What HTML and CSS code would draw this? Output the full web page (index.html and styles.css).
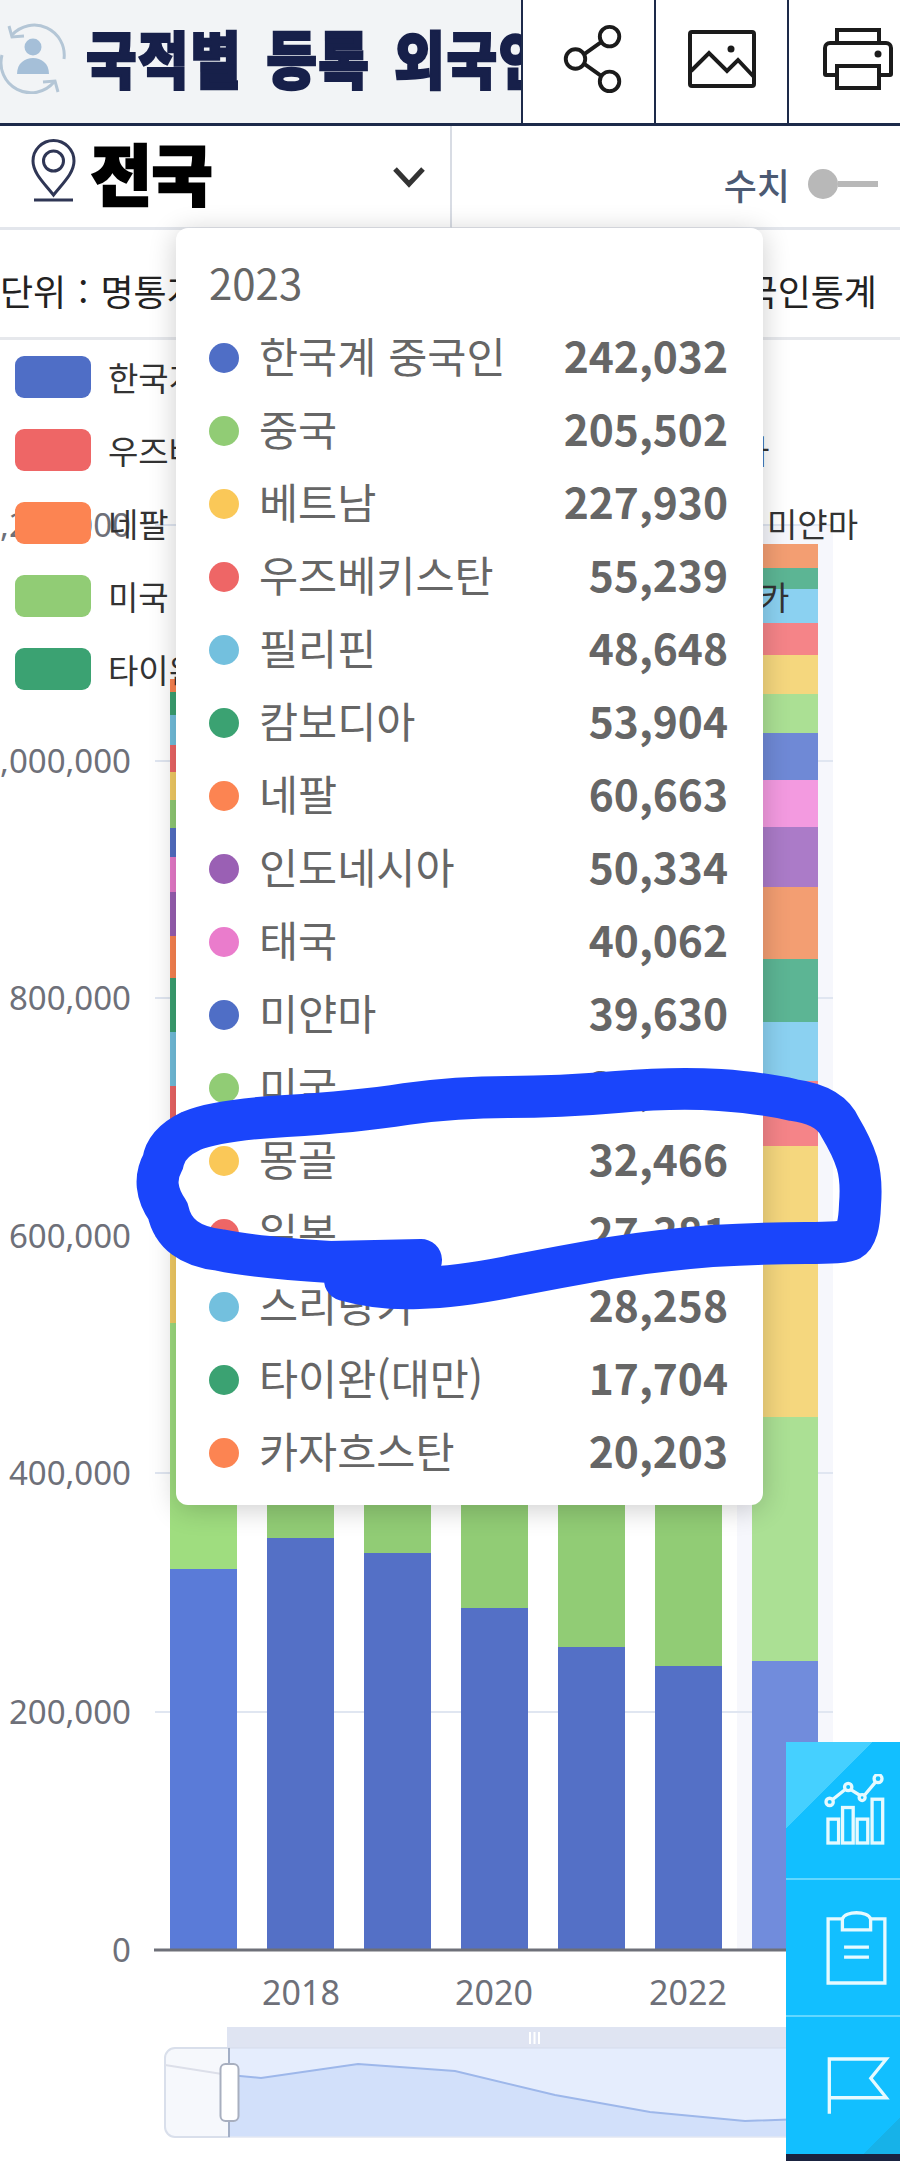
FILE: index.html
```html
<!DOCTYPE html>
<html lang="ko">
<head>
  <meta charset="UTF-8">
  <title>국적별 등록 외국인 현황</title>
  <link rel="stylesheet" href="styles.css">
</head>
<body>
<div class="page">

  <!-- Title bar -->
  <div class="top-bar">
    <div class="title-box">
      <svg class="title-icon" viewBox="0 0 66 74" fill="none" stroke="#b4c6d6" stroke-width="3">
        <path d="M12 15A30 30 0 0 1 64 39"/>
        <path d="M9 6l3 11 12-1"/>
        <path d="M54 62A30 30 0 0 1 2 35"/>
        <path d="M58 72l-3-11-12 1"/>
        <circle cx="33" cy="27" r="8.500" fill="#a5bfd8" stroke="none"/>
        <path d="M17 54c0-11 8-16 16-16s16 5 16 16z" fill="#a5bfd8" stroke="none"/>
      </svg>
      <h1 class="title">국적별 등록 외국인 현황</h1>
    </div>
    <div class="tool-btn tool-btn-first">
      <svg width="62" height="72" viewBox="0 0 62 74" fill="none" stroke="#1b1b1b" stroke-width="4">
        <circle cx="48" cy="14" r="10"/>
        <circle cx="13" cy="37" r="10"/>
        <circle cx="48" cy="60" r="10"/>
        <path d="M22 32l17-12M22 42l17 12"/>
      </svg>
    </div>
    <div class="tool-btn">
      <svg width="68" height="58" viewBox="0 0 68 58" fill="none" stroke="#1b1b1b" stroke-width="4">
        <rect x="2" y="2" width="64" height="54" rx="2"/>
        <path d="M3 41l18-18 18 18 11-11 16 17"/>
        <circle cx="43" cy="19" r="3.500" fill="#1b1b1b" stroke="none"/>
      </svg>
    </div>
    <div class="tool-btn tool-btn-last">
      <svg width="70" height="62" viewBox="0 0 70 62" fill="none" stroke="#1b1b1b" stroke-width="4">
        <path d="M14 15V2h42v13"/>
        <path d="M14 47H3a1 1 0 0 1-1-1V20a5 5 0 0 1 5-5h56a5 5 0 0 1 5 5v26a1 1 0 0 1-1 1H56"/>
        <rect x="14" y="38" width="42" height="22"/>
        <circle cx="55" cy="26" r="3.500" fill="#1b1b1b" stroke="none"/>
      </svg>
    </div>
  </div>

  <!-- Region and value toggle -->
  <div class="filter-row">
    <div class="region-box">
      <svg class="pin-icon" viewBox="0 0 47 63" fill="none" stroke="#2f3655" stroke-width="3">
        <path d="M23.500 56C14 44 3 34 3 22a20.500 20.500 0 0 1 41 0c0 12-11 22-20.500 34z"/>
        <circle cx="23.500" cy="22" r="10"/>
        <path d="M4 61h39"/>
      </svg>
      <span class="region-name">전국</span>
      <svg class="chevron" viewBox="0 0 34 22" fill="none" stroke="#333" stroke-width="5">
        <path d="M3 3l14 15L31 3"/>
      </svg>
    </div>
    <div class="toggle-box">
      <span class="toggle-label">수치</span>
      <span class="toggle-dot"></span>
      <span class="toggle-line"></span>
    </div>
  </div>

  <!-- Unit and source -->
  <div class="unit-row">
    <span>단위 : 명통계</span>
    <span class="source">외국인통계</span>
  </div>

  <!-- Chart -->
  <div class="chart-area">
    <svg class="chart" width="900" height="1820" viewBox="0 340 900 1820">
      <rect x="737" y="525" width="96" height="1425" fill="#f6f7fc"/>
      <g stroke="#e0e6f1" stroke-width="2">
        <path d="M155 525H833M155 761H833M155 998H833M155 1236H833M155 1473H833M155 1712H833"/>
      </g>

      <g class="axis-text">
        <text x="131" y="537">1,200,000</text>
        <text x="131" y="773">1,000,000</text>
        <text x="131" y="1010">800,000</text>
        <text x="131" y="1248">600,000</text>
        <text x="131" y="1485">400,000</text>
        <text x="131" y="1724">200,000</text>
        <text x="131" y="1962">0</text>
      </g>

      <!-- 2017 -->
      <rect x="170" y="679" width="67" height="13" fill="#fc8452"/>
      <rect x="170" y="692" width="67" height="23" fill="#3ba272"/>
      <rect x="170" y="715" width="67" height="30" fill="#73c0de"/>
      <rect x="170" y="745" width="67" height="27" fill="#ee6666"/>
      <rect x="170" y="772" width="67" height="28" fill="#f4cd65"/>
      <rect x="170" y="800" width="67" height="28" fill="#91cc75"/>
      <rect x="170" y="828" width="67" height="29" fill="#5470c6"/>
      <rect x="170" y="857" width="67" height="35" fill="#ea7ccc"/>
      <rect x="170" y="892" width="67" height="44" fill="#9a60b4"/>
      <rect x="170" y="936" width="67" height="42" fill="#fc8452"/>
      <rect x="170" y="978" width="67" height="54" fill="#3ba272"/>
      <rect x="170" y="1032" width="67" height="54" fill="#73c0de"/>
      <rect x="170" y="1086" width="67" height="74" fill="#ee6666"/>
      <rect x="170" y="1160" width="67" height="163" fill="#f4cd65"/>
      <rect x="170" y="1323" width="67" height="246" fill="#9fdd7f"/>
      <rect x="170" y="1569" width="67" height="381" fill="#5a7bd8"/>

      <!-- 2018 to 2022, the upper parts stay behind the tooltip -->
      <rect x="267" y="1400" width="67" height="138" fill="#91cc75"/>
      <rect x="267" y="1538" width="67" height="412" fill="#5470c6"/>
      <rect x="364" y="1400" width="67" height="153" fill="#91cc75"/>
      <rect x="364" y="1553" width="67" height="397" fill="#5470c6"/>
      <rect x="461" y="1400" width="67" height="208" fill="#91cc75"/>
      <rect x="461" y="1608" width="67" height="342" fill="#5470c6"/>
      <rect x="558" y="1400" width="67" height="247" fill="#91cc75"/>
      <rect x="558" y="1647" width="67" height="303" fill="#5470c6"/>
      <rect x="655" y="1400" width="67" height="266" fill="#91cc75"/>
      <rect x="655" y="1666" width="67" height="284" fill="#5470c6"/>

      <!-- 2023, highlighted -->
      <rect x="752" y="544" width="66" height="24" fill="#f39e72"/>
      <rect x="752" y="568" width="66" height="21" fill="#5cb594"/>
      <rect x="752" y="589" width="66" height="34" fill="#8bd1f1"/>
      <rect x="752" y="623" width="66" height="32" fill="#f58488"/>
      <rect x="752" y="655" width="66" height="39" fill="#f5d77e"/>
      <rect x="752" y="694" width="66" height="39" fill="#abe094"/>
      <rect x="752" y="733" width="66" height="47" fill="#6f89d6"/>
      <rect x="752" y="780" width="66" height="47" fill="#f39ae0"/>
      <rect x="752" y="827" width="66" height="60" fill="#ab7bc8"/>
      <rect x="752" y="887" width="66" height="72" fill="#f39e72"/>
      <rect x="752" y="959" width="66" height="63" fill="#5cb594"/>
      <rect x="752" y="1022" width="66" height="59" fill="#8bd1f1"/>
      <rect x="752" y="1081" width="66" height="65" fill="#f58488"/>
      <rect x="752" y="1146" width="66" height="271" fill="#f5d77e"/>
      <rect x="752" y="1417" width="66" height="244" fill="#abe094"/>
      <rect x="752" y="1661" width="66" height="289" fill="#718cdc"/>

      <path d="M154 1950H833" stroke="#6e7079" stroke-width="3"/>

      <g class="axis-text axis-years">
        <text x="301" y="2005">2018</text>
        <text x="494" y="2005">2020</text>
        <text x="688" y="2005">2022</text>
      </g>

      <!-- Range slider -->
      <rect x="227" y="2027" width="600" height="21" fill="#dfe4f2"/>
      <path d="M530 2032v12M534.500 2032v12M539 2032v12" stroke="#fff" stroke-width="2"/>
      <path d="M229 2048H175a10 10 0 0 0-10 10v69a10 10 0 0 0 10 10h54z" fill="#f6f8fc" stroke="#d9dfeb" stroke-width="2"/>
      <rect x="229" y="2048" width="600" height="89" fill="#e5edfd" stroke="#d5dcec" stroke-width="1"/>
      <path d="M165 2065L222 2074" stroke="#dcdfe9" stroke-width="2"/>
      <path d="M229 2075L261 2078L358 2064L455 2071L555 2095L650 2112L745 2121L829 2118V2136H229z" fill="#d2e0fa"/>
      <path d="M229 2075L261 2078L358 2064L455 2071L555 2095L650 2112L745 2121L829 2118" fill="none" stroke="#9db7ea" stroke-width="2"/>
      <path d="M229 2048V2137" stroke="#a3afc6" stroke-width="2"/>
      <rect x="220.500" y="2064" width="18" height="57" rx="5" fill="#fff" stroke="#a8afbf" stroke-width="2"/>
    </svg>

    <!-- Legend, drawn over the chart -->
    <div class="legend">
      <div class="legend-row"><i class="swatch c-blue"></i><span>한국계 중국인</span></div>
      <div class="legend-row"><i class="swatch c-red"></i><span>우즈베키스탄</span><span class="far far-1">캄보디아</span></div>
      <div class="legend-row"><i class="swatch c-orange"></i><span>네팔</span><span class="far far-2">미얀마</span></div>
      <div class="legend-row"><i class="swatch c-green"></i><span>미국</span><span class="far far-3">스리랑카</span></div>
      <div class="legend-row"><i class="swatch c-teal"></i><span>타이완(대만)</span></div>
    </div>
  </div>

  <!-- Tooltip for 2023 -->
  <div class="tooltip">
    <div class="tooltip-title">2023</div>
    <div class="tip-row"><i class="dot c-blue"></i><span class="tip-name">한국계 중국인</span><b class="tip-val">242,032</b></div>
    <div class="tip-row"><i class="dot c-green"></i><span class="tip-name">중국</span><b class="tip-val">205,502</b></div>
    <div class="tip-row"><i class="dot c-yellow"></i><span class="tip-name">베트남</span><b class="tip-val">227,930</b></div>
    <div class="tip-row"><i class="dot c-red"></i><span class="tip-name">우즈베키스탄</span><b class="tip-val">55,239</b></div>
    <div class="tip-row"><i class="dot c-sky"></i><span class="tip-name">필리핀</span><b class="tip-val">48,648</b></div>
    <div class="tip-row"><i class="dot c-teal"></i><span class="tip-name">캄보디아</span><b class="tip-val">53,904</b></div>
    <div class="tip-row"><i class="dot c-orange"></i><span class="tip-name">네팔</span><b class="tip-val">60,663</b></div>
    <div class="tip-row"><i class="dot c-purple"></i><span class="tip-name">인도네시아</span><b class="tip-val">50,334</b></div>
    <div class="tip-row"><i class="dot c-pink"></i><span class="tip-name">태국</span><b class="tip-val">40,062</b></div>
    <div class="tip-row"><i class="dot c-blue"></i><span class="tip-name">미얀마</span><b class="tip-val">39,630</b></div>
    <div class="tip-row"><i class="dot c-green"></i><span class="tip-name">미국</span><b class="tip-val">33,456</b></div>
    <div class="tip-row"><i class="dot c-yellow"></i><span class="tip-name">몽골</span><b class="tip-val">32,466</b></div>
    <div class="tip-row"><i class="dot c-red"></i><span class="tip-name">일본</span><b class="tip-val">27,381</b></div>
    <div class="tip-row"><i class="dot c-sky"></i><span class="tip-name">스리랑카</span><b class="tip-val">28,258</b></div>
    <div class="tip-row"><i class="dot c-teal"></i><span class="tip-name">타이완(대만)</span><b class="tip-val">17,704</b></div>
    <div class="tip-row"><i class="dot c-orange"></i><span class="tip-name">카자흐스탄</span><b class="tip-val">20,203</b></div>
  </div>

  <!-- Floating side menu -->
  <div class="side-menu">
    <div class="side-item side-first">
      <svg width="63" height="72" viewBox="195 165 190 215" fill="none" stroke="#e6faff" stroke-width="10">
        <rect x="207" y="300" width="32" height="72"/>
        <rect x="251" y="265" width="32" height="107"/>
        <rect x="295" y="300" width="32" height="72"/>
        <rect x="340" y="240" width="32" height="132"/>
        <path d="M222 240l35-28M277 212l26 16M317 228l32-38"/>
        <circle cx="212" cy="248" r="11"/>
        <circle cx="268" cy="203" r="11"/>
        <circle cx="310" cy="235" r="9"/>
        <circle cx="358" cy="178" r="12"/>
      </svg>
    </div>
    <div class="side-item">
      <svg width="65" height="78" viewBox="190 565 195 235" fill="none" stroke="#e6faff" stroke-width="10">
        <path d="M245 595H202V788H373V595H330"/>
        <path d="M245 628H330V595C322 570 253 570 245 595z"/>
        <path d="M250 680H325M250 710H325"/>
      </svg>
    </div>
    <div class="side-item side-last">
      <svg width="67" height="63" viewBox="185 1000 200 190" fill="none" stroke="#e6faff" stroke-width="10">
        <path d="M200 1180V1015H372L325 1073L372 1132H200"/>
      </svg>
    </div>
    <div class="side-foot"></div>
  </div>

  <!-- Hand-drawn mark on top of the screenshot -->
  <svg class="scribble" width="900" height="2161" viewBox="0 0 900 2161" fill="none">
    <path d="M421 1260L330 1262Q253 1257 220 1250Q175 1245 168 1211Q150 1185 163 1162Q166 1143 191 1131Q217 1120 286 1116Q355 1112 406 1104Q457 1097 508 1097Q559 1097 617 1092Q676 1087 720 1090Q763 1093 793 1100Q830 1105 840 1127Q852 1147 857 1163Q862 1180 860 1205Q859 1235 850 1240Q845 1243 806 1243Q763 1243 712 1246Q661 1250 610 1258Q559 1267 508 1277Q457 1287 419 1288Q381 1290 345 1280" stroke="#1a45fb" stroke-width="42" stroke-linecap="round" stroke-linejoin="round"/>
  </svg>
</div>
</body>
</html>
```

FILE: styles.css
```css
* {
  box-sizing: border-box;
}

body {
  margin: 0;
  background: #fff;
  font-family: "Noto Sans CJK KR", "Noto Sans", sans-serif;
}

.page {
  position: relative;
  width: 900px;
  height: 2161px;
  overflow: hidden;
  background: #fff;
}

/* title bar */
.top-bar {
  display: flex;
  height: 126px;
  border-bottom: 3px solid #1d2a4a;
}

.title-box {
  display: flex;
  align-items: center;
  width: 521px;
  flex-shrink: 0;
  padding-bottom: 9px;
  overflow: hidden;
  background: #f2f4f6;
}

.title-icon {
  width: 66px;
  height: 74px;
  flex-shrink: 0;
  margin-right: 20px;
}

.title {
  margin: 0;
  color: #17204a;
  font-size: 55px;
  font-weight: 900;
  letter-spacing: 1.5px;
  word-spacing: 7px;
  white-space: nowrap;
  -webkit-text-stroke: 2px #17204a;
  transform: scaleY(1.13);
}

.tool-btn {
  display: flex;
  align-items: center;
  justify-content: center;
  width: 133px;
  flex-shrink: 0;
  padding-bottom: 5px;
  border-left: 2px solid #1d2a4a;
}

.tool-btn-first {
  padding-left: 8px;
}

.tool-btn-last {
  width: 140px;
}

/* region row */
.filter-row {
  display: flex;
  height: 104px;
}

.region-box {
  display: flex;
  align-items: center;
  width: 452px;
  padding: 0 24px 12px 30px;
  border-right: 2px solid #d8dce4;
  border-bottom: 3px solid #e3e6ec;
}

.pin-icon {
  width: 47px;
  height: 63px;
  margin-right: 14px;
}

.region-name {
  color: #000;
  font-size: 66px;
  font-weight: 900;
  line-height: 1;
  -webkit-text-stroke: 2.5px #000;
}

.chevron {
  width: 34px;
  height: 22px;
  margin-left: auto;
  margin-top: 12px;
}

.toggle-box {
  display: flex;
  flex: 1;
  align-items: center;
  justify-content: flex-end;
  padding: 14px 22px 0 0;
  border-bottom: 3px solid #e3e6ec;
}

.toggle-label {
  margin-right: 18px;
  color: #4c5a73;
  font-size: 36px;
  font-weight: 500;
}

.toggle-dot {
  width: 30px;
  height: 30px;
  border-radius: 50%;
  background: #b8b8b8;
}

.toggle-line {
  width: 40px;
  height: 6px;
  background: #b8b8b8;
}

/* unit row */
.unit-row {
  display: flex;
  justify-content: space-between;
  align-items: center;
  height: 110px;
  padding: 12px 23px 0 0;
  color: #222;
  font-size: 36px;
  word-spacing: 2px;
  border-bottom: 3px solid #e6e8ec;
}

/* chart */
.chart-area {
  position: relative;
}

.chart {
  display: block;
}

.axis-text text {
  fill: #6e7079;
  font-family: "Noto Sans", sans-serif;
  font-size: 33px;
  text-anchor: end;
}

.axis-text.axis-years text {
  font-size: 34px;
  text-anchor: middle;
}

.legend {
  position: absolute;
  left: 15px;
  top: 16px;
  display: flex;
  flex-direction: column;
  gap: 31px;
}

.legend-row {
  position: relative;
  display: flex;
  align-items: center;
  gap: 17px;
  height: 42px;
  color: #333;
  font-size: 33px;
  white-space: nowrap;
}

.swatch {
  width: 76px;
  height: 42px;
  border-radius: 9px;
}

.far {
  position: absolute;
}

.far-1 {
  left: 633px;
}

.far-2 {
  left: 752px;
}

.far-3 {
  left: 653px;
}

.c-blue { background: #4f6ec6; }
.c-green { background: #91cc75; }
.c-yellow { background: #fac858; }
.c-red { background: #ee6666; }
.c-sky { background: #73c0de; }
.c-teal { background: #3ba272; }
.c-orange { background: #fc8452; }
.c-purple { background: #9a60b4; }
.c-pink { background: #ea7ccc; }

/* tooltip */
.tooltip {
  position: absolute;
  left: 176px;
  top: 228px;
  width: 587px;
  height: 1277px;
  padding: 0 35px 0 33px;
  background: #fff;
  border-radius: 12px;
  box-shadow: 0 4px 28px rgba(0, 0, 0, 0.2);
  color: #666;
}

.tooltip-title {
  height: 93px;
  padding-top: 26px;
  font-size: 42px;
  line-height: 56px;
}

.tip-row {
  display: flex;
  align-items: center;
  height: 73px;
}

.dot {
  width: 30px;
  height: 30px;
  border-radius: 50%;
  margin-right: 20px;
}

.tip-name {
  padding-bottom: 6px;
  font-size: 42.5px;
  line-height: 60px;
}

.tip-val {
  margin-left: auto;
  padding-bottom: 6px;
  font-size: 42.5px;
  font-weight: 700;
  line-height: 60px;
}

/* side menu */
.side-menu {
  position: absolute;
  left: 786px;
  top: 1742px;
  width: 114px;
  background: #12bfff;
}

.side-item {
  display: flex;
  align-items: center;
  height: 137px;
  padding-left: 38px;
  border-bottom: 2px solid #62d7ff;
}

.side-first {
  height: 138px;
  background: linear-gradient(135deg, #45d0ff 61px, #12bfff 61px);
}

.side-last {
  border-bottom: none;
  background: linear-gradient(315deg, #17b2e8 26px, #12bfff 26px);
}

.side-foot {
  height: 10px;
  background: #1a2340;
}

.scribble {
  position: absolute;
  left: 0;
  top: 0;
}
```
